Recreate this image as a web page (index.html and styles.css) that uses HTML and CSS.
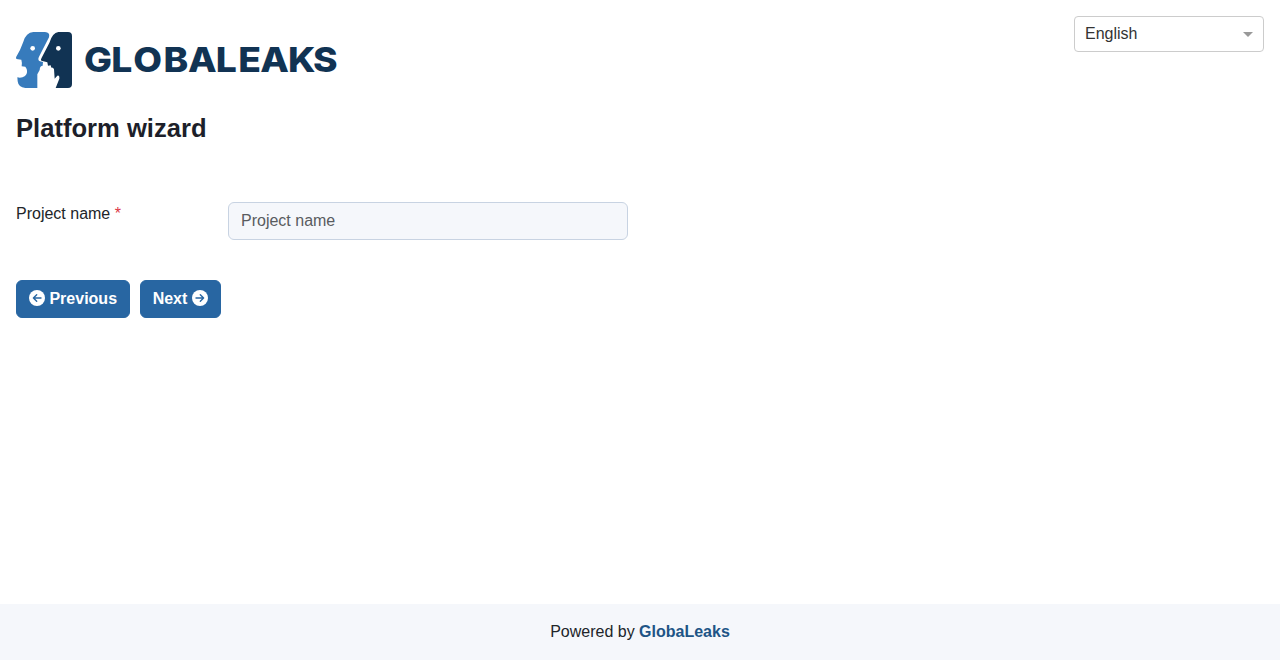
FILE: index.html
```html
<!DOCTYPE html>
<html lang="en">
<head>
<meta charset="utf-8">
<title>GlobaLeaks</title>
<link rel="stylesheet" href="styles.css">
</head>
<body>
<header class="header">
  <div class="brand">
    <svg class="brand-mark" viewBox="18 18 168 168" aria-hidden="true">
      <path fill="#377bbc" d="M70 18H105Q121 19 117 34L87 92Q82 102 90 106L99 108L98 119L93 121Q89 125 89 132L82 145V186H46Q25 184 23 166L22 154Q35 157 45 150Q54 142 50 129L46 122L35 121Q37 111 34 101L19 99L18 94Q31 73 40 47Q48 20 70 18Z"/>
      <path fill="#113353" d="M145 18H174Q186 18 186 30V174Q186 186 174 186H137L148 158Q149 147 142 149L134 158L132 130Q130 124 124 125L122 118L114 119L112 109L94 104Q91 101 95 95L118 51Q127 20 145 18Z"/>
      <circle cx="68" cy="67" r="7" fill="#fff"/>
      <circle cx="145" cy="67" r="7" fill="#fff"/>
    </svg>
    <svg class="brand-name" viewBox="0 0 235 56" preserveAspectRatio="none" role="img" aria-label="GLOBALEAKS">
      <text class="brand-text" y="40" x="0 25.1 45.2 73 95.4 121 141.7 161.8 187.3 210.3">GLOBALEAKS</text>
    </svg>
  </div>
  <div class="language"><span>English</span><i class="caret"></i></div>
</header>
<main class="content">
  <h1 class="title">Platform wizard</h1>
  <div class="field">
    <label class="label" for="name">Project name <span class="required">*</span></label>
    <input class="input" id="name" type="text" placeholder="Project name">
  </div>
  <div class="actions">
    <button class="button"><svg class="icon" viewBox="0 0 16 16"><circle cx="8" cy="8" r="8" fill="#fff"/><path class="arrow" d="M12 8H4.4M7.7 4.7L4.4 8L7.7 11.3"/></svg> Previous</button>
    <button class="button button-next">Next <svg class="icon" viewBox="0 0 16 16"><circle cx="8" cy="8" r="8" fill="#fff"/><path class="arrow" d="M4 8H11.6M8.3 4.7L11.6 8L8.3 11.3"/></svg></button>
  </div>
</main>
<footer class="footer"><span>Powered by <a class="link">GlobaLeaks</a></span></footer>
</body>
</html>
```
FILE: styles.css
```css
* { box-sizing: border-box; }
body {
  margin: 0;
  height: 660px;
  display: flex;
  flex-direction: column;
  background: #fff;
  color: #212529;
  font: 16px/24px "Liberation Sans", Arial, sans-serif;
}
.header {
  display: flex;
  justify-content: space-between;
  align-items: flex-start;
  padding: 16px 16px 0;
}
.brand { display: flex; gap: 12px; padding-top: 16px; }
.brand-mark { width: 56px; height: 56px; }
.brand-name { width: 256px; height: 56px; }
.brand-text {
  font: 800 34.2px Inter, sans-serif;
  fill: #113353;
}
.language {
  display: flex;
  justify-content: space-between;
  align-items: center;
  width: 190px;
  height: 36px;
  padding: 0 10px;
  border: 1px solid #ccc;
  border-radius: 4px;
  color: #333;
}
.caret {
  border: 5px solid transparent;
  border-top-color: #999;
  border-bottom: 0;
}
.content { flex: 1; padding: 25px 16px 0; }
.title {
  margin: 0;
  color: #1d1f2a;
  font-size: 25.6px;
  line-height: 31px;
}
.field { display: flex; align-items: flex-start; padding-top: 58px; }
.label { width: 212px; }
.required { color: #dc3545; }
.input {
  width: 400px;
  height: 38px;
  padding: 6px 12px;
  border: 1px solid #c8d3e2;
  border-radius: 6px;
  background: #f5f7fb;
  font: inherit;
}
.input::placeholder { color: #595c5f; opacity: 1; }
.actions { display: flex; gap: 10px; padding-top: 40px; }
.button {
  height: 38px;
  padding: 6px 12px;
  border: 1px solid #2866a2;
  border-radius: 6px;
  background: #2866a2;
  color: #fff;
  font: inherit;
  font-weight: 700;
}
.button-next { margin-left: -.4px; }
.icon { width: 16px; height: 16px; vertical-align: -2px; }
.arrow {
  fill: none;
  stroke: #2866a2;
  stroke-width: 1.4;
  stroke-linecap: round;
  stroke-linejoin: round;
}
.footer {
  height: 56px;
  padding: 16px;
  background: #f5f7fb;
  text-align: center;
}
.link { color: #205486; font-weight: 700; }
```
